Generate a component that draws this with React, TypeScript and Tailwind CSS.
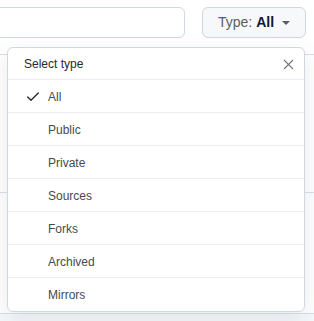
import { Check, X } from 'lucide-react'

const types = ['All', 'Public', 'Private', 'Sources', 'Forks', 'Archived', 'Mirrors']

// 背景里的仓库列表（只露出几条分隔线）
function ListBackdrop() {
  return (
    <div className="mt-4">
      <div className="h-[138px] border-t border-[#d8dee4]" />
      <div className="h-[121px] border-t border-[#d8dee4]" />
      <div className="h-[20px] border-t border-[#d8dee4] bg-[#f6f8fa]" />
    </div>
  )
}

function TypeMenu({ selected }: { selected: string }) {
  return (
    <div className="absolute left-[7px] top-[47px] w-[298px] overflow-hidden rounded-md border border-[#d0d7de] bg-white shadow-[0_8px_24px_rgba(140,149,159,0.2)]">
      <div className="flex h-[32px] items-center justify-between border-b border-[#eaeef2] pl-[16px] pr-[7px] pt-[1px]">
        <span className="text-[12px] text-[#24292f]">Select type</span>
        <X size={17} strokeWidth={1.5} className="text-[#6e7781]" />
      </div>
      {types.map((t, i) => (
        <div
          key={t}
          className={`flex h-[33px] items-center pl-[17px] pt-[1px] text-[12px] text-[#454b52] ${i < types.length - 1 ? 'border-b border-[#eaeef2]' : ''}`}
        >
          <span className="flex w-[23px] items-center">
            {t === selected && <Check size={16} strokeWidth={2} className="text-[#24292f]" />}
          </span>
          <span>{t}</span>
        </div>
      ))}
    </div>
  )
}

export default function App() {
  return (
    <div
      className="relative h-[321px] w-[314px] overflow-hidden bg-white"
      style={{ fontFamily: '"Liberation Sans", Arial, sans-serif' }}
    >
      <div className="flex items-center gap-[17px] pt-[7px]">
        <div className="-ml-2 h-[31px] w-[193px] rounded-md border border-[#d0d7de] bg-white" />
        <button className="flex h-[31px] w-[104px] items-center justify-center gap-[8px] rounded-md border border-[#d0d7de] bg-[#f6f8fa] text-[14px]">
          <span>
            <span className="text-[#57606a]">Type: </span>
            <span className="font-semibold text-[#0d1a33]">All</span>
          </span>
          <svg width="8" height="4" viewBox="0 0 8 4" className="mt-[1px]">
            <path d="M0 0h8L4 4z" fill="#57606a" />
          </svg>
        </button>
      </div>
      <ListBackdrop />
      <TypeMenu selected="All" />
    </div>
  )
}
